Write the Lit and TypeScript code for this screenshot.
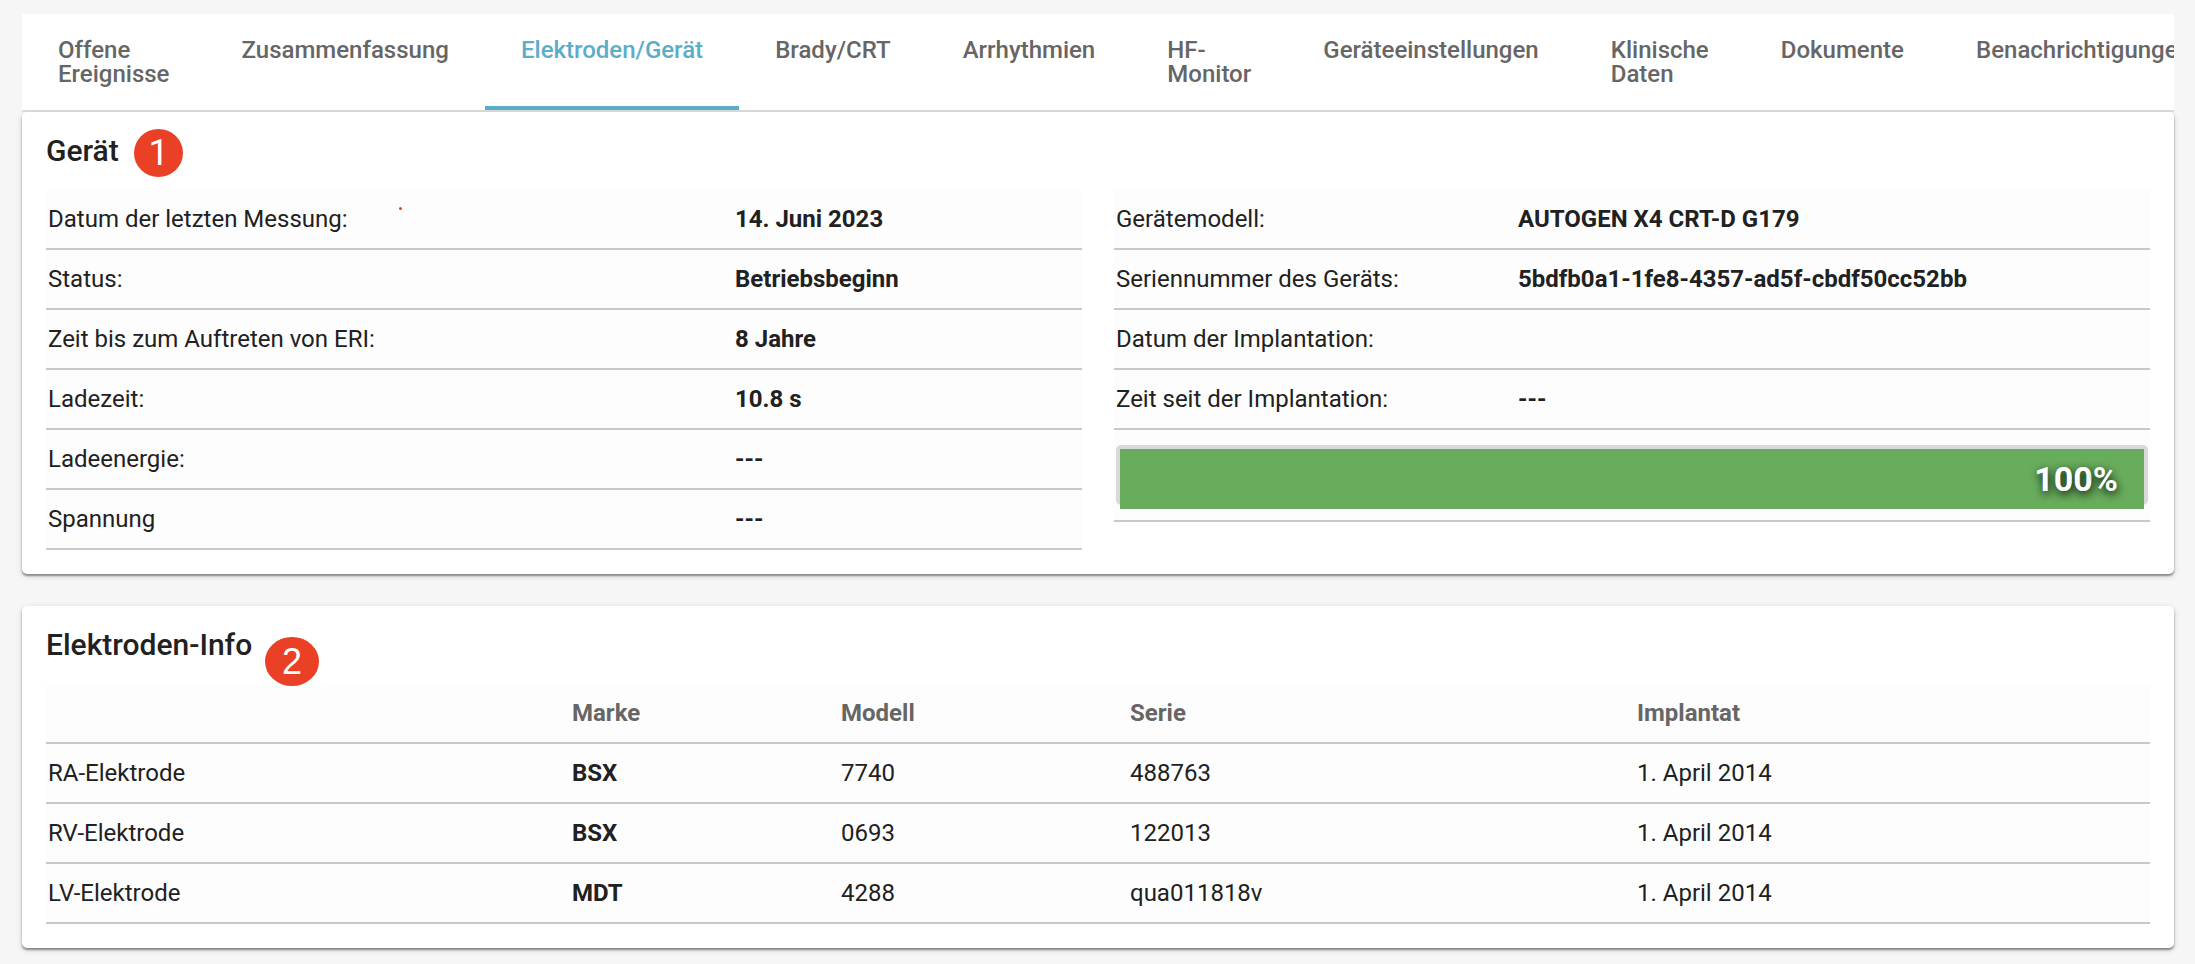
import { LitElement, html, css } from 'lit';
import { customElement, property } from 'lit/decorators.js';
import { classMap } from 'lit/directives/class-map.js';

interface Field {
  label: string;
  value: string;
}

interface Lead {
  name: string;
  brand: string;
  model: string;
  serial: string;
  implanted: string;
}

const TABS = [
  'Offene Ereignisse',
  'Zusammenfassung',
  'Elektroden/Gerät',
  'Brady/CRT',
  'Arrhythmien',
  'HF-Monitor',
  'Geräteeinstellungen',
  'Klinische Daten',
  'Dokumente',
  'Benachrichtigungen'
];

const STATUS_FIELDS: Field[] = [
  { label: 'Datum der letzten Messung:', value: '14. Juni 2023' },
  { label: 'Status:', value: 'Betriebsbeginn' },
  { label: 'Zeit bis zum Auftreten von ERI:', value: '8 Jahre' },
  { label: 'Ladezeit:', value: '10.8 s' },
  { label: 'Ladeenergie:', value: '---' },
  { label: 'Spannung', value: '---' }
];

const MODEL_FIELDS: Field[] = [
  { label: 'Gerätemodell:', value: 'AUTOGEN X4 CRT-D G179' },
  { label: 'Seriennummer des Geräts:', value: '5bdfb0a1-1fe8-4357-ad5f-cbdf50cc52bb' },
  { label: 'Datum der Implantation:', value: '' },
  { label: 'Zeit seit der Implantation:', value: '---' }
];

const LEADS: Lead[] = [
  { name: 'RA-Elektrode', brand: 'BSX', model: '7740', serial: '488763', implanted: '1. April 2014' },
  { name: 'RV-Elektrode', brand: 'BSX', model: '0693', serial: '122013', implanted: '1. April 2014' },
  { name: 'LV-Elektrode', brand: 'MDT', model: '4288', serial: 'qua011818v', implanted: '1. April 2014' }
];

@customElement('tab-bar')
class TabBar extends LitElement {
  @property({ type: Array }) tabs: string[] = [];
  @property({ type: Number }) active = 0;

  render() {
    return html`
      <nav class="tabs">
        ${this.tabs.map((tab, i) => html`
          <a class=${classMap({ tab: true, active: i === this.active })}>${tab}</a>
        `)}
      </nav>
    `;
  }

  static styles = css`
    :host {
      display: block;
    }
    .tabs {
      display: flex;
      height: 96px;
      overflow: hidden;
      background: #fff;
      border-bottom: 2px solid #dedede;
    }
    .tab {
      box-sizing: border-box;
      padding: 24px 36.1px 0 36px;
      border-bottom: 4px solid transparent;
      font-size: 24px;
      font-weight: 500;
      line-height: 24px;
      color: #666;
    }
    .tab.active {
      color: #5badc8;
      border-bottom-color: #5badc8;
    }
  `;
}

@customElement('battery-bar')
class BatteryBar extends LitElement {
  @property({ type: Number }) percent = 0;

  render() {
    return html`
      <div class="frame">
        <div class="fill" style="width: ${this.percent}%">${this.percent}%</div>
      </div>
    `;
  }

  static styles = css`
    :host {
      display: block;
    }
    .frame {
      box-sizing: border-box;
      height: 60px;
      padding: 4px;
      border-radius: 5px;
      background: #d9d9d9;
    }
    /* as tall as the frame, so it runs over its lower edge */
    .fill {
      box-sizing: border-box;
      height: 60px;
      padding-right: 26px;
      background: #68ad5c;
      color: #fff;
      font-size: 34px;
      font-weight: 700;
      line-height: 60px;
      text-align: right;
      text-shadow: 1px 3px 10px #000;
    }
  `;
}

@customElement('field-list')
class FieldList extends LitElement {
  @property({ type: Array }) fields: Field[] = [];

  render() {
    return html`
      ${this.fields.map(field => html`
        <div class="row">
          <span class="label">${field.label}</span>
          <span class="value">${field.value}</span>
        </div>
      `)}
      <slot></slot>
    `;
  }

  static styles = css`
    :host {
      display: block;
    }
    .row {
      display: grid;
      grid-template-columns: var(--label-width) 1fr;
      box-sizing: border-box;
      height: 60px;
      padding-left: 2px;
      line-height: 58px;
      background: #fdfdfd;
      border-bottom: 2px solid #c8c8c8;
    }
    .value {
      font-weight: 700;
    }
  `;
}

@customElement('app-root')
class AppRoot extends LitElement {
  render() {
    return html`
      <tab-bar .tabs=${TABS} .active=${2}></tab-bar>

      <section class="card device">
        <h2 class="title">Gerät<span class="badge first">1</span></h2>
        <i class="dot"></i>
        <div class="columns">
          <field-list class="status" .fields=${STATUS_FIELDS}></field-list>
          <field-list class="model" .fields=${MODEL_FIELDS}>
            <div class="battery">
              <battery-bar .percent=${100}></battery-bar>
            </div>
          </field-list>
        </div>
      </section>

      <section class="card leads">
        <h2 class="title">Elektroden-Info<span class="badge second">2</span></h2>
        <div class="lead head">
          <span></span>
          <span>Marke</span>
          <span>Modell</span>
          <span>Serie</span>
          <span>Implantat</span>
        </div>
        ${LEADS.map(lead => html`
          <div class="lead">
            <span>${lead.name}</span>
            <span class="brand">${lead.brand}</span>
            <span>${lead.model}</span>
            <span>${lead.serial}</span>
            <span>${lead.implanted}</span>
          </div>
        `)}
      </section>
    `;
  }

  static styles = css`
    :host {
      display: block;
      box-sizing: border-box;
      height: 964px;
      padding: 14px 21px 0 22px;
      overflow: hidden;
      background: #f6f6f6;
      color: #212121;
      font-family: Roboto, sans-serif;
      font-size: 24px;
    }
    .card {
      position: relative;
      box-sizing: border-box;
      padding: 0 24px 24px;
      background: #fff;
      border-radius: 5px;
      box-shadow: 0 2px 2px rgba(0, 0, 0, 0.38), 0 2px 6px rgba(0, 0, 0, 0.16);
    }
    .leads {
      margin-top: 32px;
    }
    .title {
      position: relative;
      width: fit-content;
      height: 78px;
      margin: 0;
      font-size: 30px;
      font-weight: 500;
      line-height: 78px;
    }
    .badge {
      position: absolute;
      display: flex;
      align-items: center;
      justify-content: center;
      border-radius: 50%;
      background: #ea4025;
      color: #fff;
      font: 400 36px/1 "Liberation Sans", sans-serif;
    }
    .badge.first {
      left: 88px;
      top: 17px;
      width: 49px;
      height: 48px;
      font-family: Roboto, sans-serif;
    }
    .badge.second {
      left: 219px;
      top: 31px;
      width: 54px;
      height: 49px;
    }
    .dot {
      position: absolute;
      left: 377px;
      top: 95px;
      width: 3px;
      height: 3px;
      border-radius: 50%;
      background: #ea4025;
      z-index: 1;
    }
    .columns {
      display: grid;
      grid-template-columns: 1fr 1fr;
      gap: 32px;
    }
    .status {
      --label-width: 687px;
    }
    .model {
      --label-width: 402px;
    }
    .battery {
      box-sizing: border-box;
      height: 92px;
      padding: 15px 2px 0;
      background: #fdfdfd;
      border-bottom: 2px solid #c8c8c8;
    }
    .lead {
      display: grid;
      grid-template-columns: 524px 269px 289px 507px 1fr;
      box-sizing: border-box;
      height: 60px;
      padding-left: 2px;
      line-height: 58px;
      background: #fdfdfd;
      border-bottom: 2px solid #c8c8c8;
    }
    .head {
      color: #666;
      font-weight: 700;
    }
    .brand {
      font-weight: 700;
    }
  `;
}
